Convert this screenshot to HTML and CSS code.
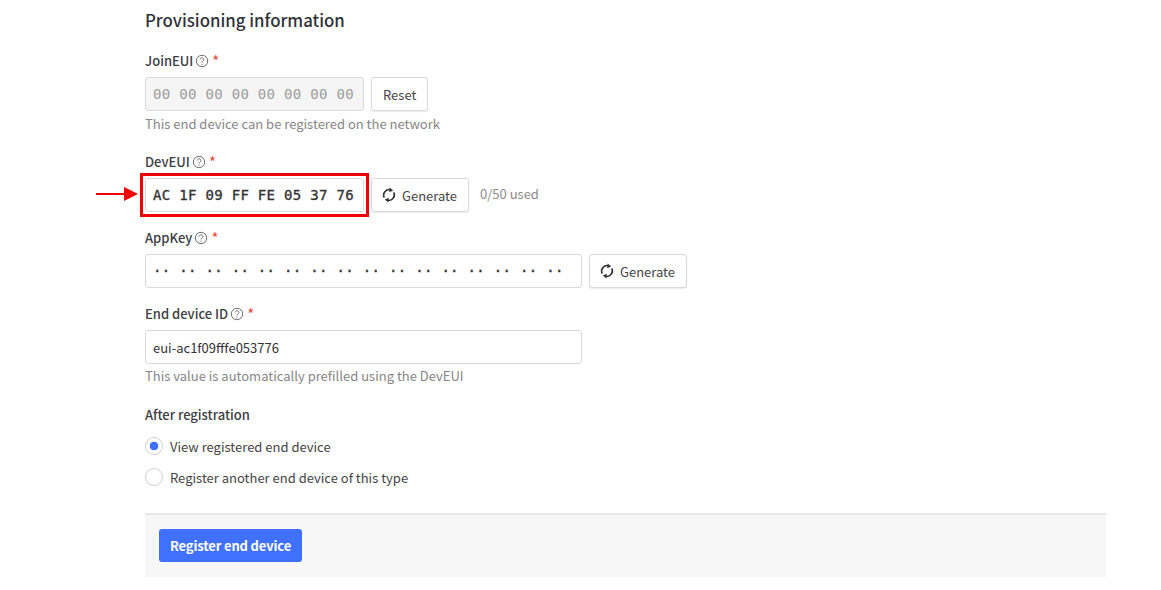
FILE: index.html
```html
<!DOCTYPE html>
<html lang="en">
  <head>
    <meta charset="UTF-8" />
    <meta name="viewport" content="width=device-width, initial-scale=1.0" />
    <title>Provisioning information</title>
    <link rel="stylesheet" href="styles.css">
  </head>
  <body>
    <div class="page">
      <h2 class="title">Provisioning information</h2>

      <div class="field field-join">
        <div class="label">JoinEUI
          <svg class="help" viewBox="0 0 14 14"><circle cx="7" cy="7" r="5.7"/><path d="M5.2 5.5a1.8 1.8 0 1 1 2.7 1.6c-.6.4-.9.7-.9 1.4"/><circle class="dot" cx="7" cy="10.2" r=".6"/></svg>
          <span class="req">*</span>
        </div>
        <div class="row">
          <div class="input mono disabled eui">00 00 00 00 00 00 00 00</div>
          <button class="btn btn-reset">Reset</button>
        </div>
        <div class="desc">This end device can be registered on the network</div>
      </div>

      <div class="field field-dev">
        <div class="label">DevEUI
          <svg class="help" viewBox="0 0 14 14"><circle cx="7" cy="7" r="5.7"/><path d="M5.2 5.5a1.8 1.8 0 1 1 2.7 1.6c-.6.4-.9.7-.9 1.4"/><circle class="dot" cx="7" cy="10.2" r=".6"/></svg>
          <span class="req">*</span>
        </div>
        <div class="row">
          <div class="input mono eui strong highlight">
            AC 1F 09 FF FE 05 37 76
            <svg class="arrow" viewBox="0 0 42 14"><path d="M0 7h30" /><polygon points="28,0 42,7 28,14"/></svg>
          </div>
          <button class="btn">
            <svg class="refresh" viewBox="0 0 16 16"><path d="M3.2 10.6A5.6 5.6 0 0 1 9.5 2.7"/><path d="M12.8 5.4A5.6 5.6 0 0 1 6.5 13.3"/><polygon points="8.6,0.4 12.2,3.4 8.2,5.2"/><polygon points="7.4,15.6 3.8,12.6 7.8,10.8"/></svg>
            Generate
          </button>
          <span class="used">0/50 used</span>
        </div>
      </div>

      <div class="field field-app">
        <div class="label">AppKey
          <svg class="help" viewBox="0 0 14 14"><circle cx="7" cy="7" r="5.7"/><path d="M5.2 5.5a1.8 1.8 0 1 1 2.7 1.6c-.6.4-.9.7-.9 1.4"/><circle class="dot" cx="7" cy="10.2" r=".6"/></svg>
          <span class="req">*</span>
        </div>
        <div class="row">
          <div class="input mono wide strong">·· ·· ·· ·· ·· ·· ·· ·· ·· ·· ·· ·· ·· ·· ·· ··</div>
          <button class="btn">
            <svg class="refresh" viewBox="0 0 16 16"><path d="M3.2 10.6A5.6 5.6 0 0 1 9.5 2.7"/><path d="M12.8 5.4A5.6 5.6 0 0 1 6.5 13.3"/><polygon points="8.6,0.4 12.2,3.4 8.2,5.2"/><polygon points="7.4,15.6 3.8,12.6 7.8,10.8"/></svg>
            Generate
          </button>
        </div>
      </div>

      <div class="field field-id">
        <div class="label">End device ID
          <svg class="help" viewBox="0 0 14 14"><circle cx="7" cy="7" r="5.7"/><path d="M5.2 5.5a1.8 1.8 0 1 1 2.7 1.6c-.6.4-.9.7-.9 1.4"/><circle class="dot" cx="7" cy="10.2" r=".6"/></svg>
          <span class="req">*</span>
        </div>
        <div class="row">
          <div class="input wide">eui-ac1f09fffe053776</div>
        </div>
        <div class="desc">This value is automatically prefilled using the DevEUI</div>
      </div>

      <div class="label after">After registration</div>
      <div class="radios">
        <div class="radio-row"><span class="radio checked"></span>View registered end device</div>
        <div class="radio-row"><span class="radio"></span>Register another end device of this type</div>
      </div>

      <div class="footer">
        <button class="btn-primary">Register end device</button>
      </div>
    </div>
  </body>
</html>
```

FILE: styles.css
```css
body {
  margin: 0;
  background: #fff;
  color: #3c3c3c;
  font-family: "Noto Sans CJK SC", "Open Sans", sans-serif;
  font-size: 13px;
}
.page {
  width: 961px;
  margin-left: 145px;
}
.title {
  margin: 0;
  padding-top: 8px;
  height: 24px;
  font-size: 16.8px;
  line-height: 24px;
  font-weight: 500;
  color: #2f3338;
}
.field-join {
  margin-top: 19px;
}
.field-join .desc {
  margin-top: 3px;
}
.field-dev {
  margin-top: 18px;
}
.field-app,
.field-id {
  margin-top: 16px;
}
.label {
  display: flex;
  align-items: center;
  height: 20px;
  line-height: 20px;
  font-weight: 500;
  color: #3c4043;
}
.help {
  width: 14px;
  height: 14px;
  margin-left: 2px;
  fill: none;
  stroke: #707070;
  stroke-width: 1;
}
.help .dot {
  fill: #707070;
  stroke: none;
}
.req {
  margin-left: 3px;
  color: #e8483f;
  font-size: 15px;
  font-weight: 400;
}
.row {
  display: flex;
  align-items: center;
  gap: 7px;
  margin-top: 6px;
}
.input {
  box-sizing: border-box;
  position: relative;
  height: 34px;
  line-height: 33px;
  padding: 0 7px;
  border: 1px solid #d9d9d9;
  border-radius: 3px;
  background: #fff;
  color: #333;
}
.mono {
  font-family: "DejaVu Sans Mono", "Liberation Mono", monospace;
  font-size: 14px;
  letter-spacing: 0.31px;
  white-space: nowrap;
}
.eui {
  width: 219px;
}
.wide {
  width: 437px;
}
.disabled {
  background: #f5f5f5;
  color: #9c9c9c;
}
.strong {
  color: #333;
  -webkit-text-stroke: 0.35px #333;
}
.highlight::after {
  content: "";
  position: absolute;
  top: -6px;
  right: -6px;
  bottom: -6px;
  left: -6px;
  border: 3px solid #f00000;
}
.arrow {
  position: absolute;
  left: -50px;
  top: 8px;
  width: 42px;
  height: 14px;
  fill: #f00000;
  stroke: #f00000;
  stroke-width: 2;
}
.arrow polygon {
  stroke: none;
}
.btn {
  display: flex;
  align-items: center;
  gap: 5px;
  box-sizing: border-box;
  height: 34px;
  padding: 0 11px 0 9px;
  border: 1px solid #d9d9d9;
  border-radius: 3px;
  background: #fff;
  box-shadow: 0 1px 1px rgba(0, 0, 0, 0.08);
  color: #444;
  font: inherit;
}
.btn-reset {
  padding: 0 11px;
}
.refresh {
  width: 16px;
  height: 16px;
  fill: #333;
  stroke: none;
}
.refresh path {
  fill: none;
  stroke: #333;
  stroke-width: 1.6;
}
.used {
  margin: 0 0 3px 4px;
  color: #8c8c8c;
}
.desc {
  height: 20px;
  line-height: 20px;
  margin-top: 2px;
  color: #868686;
}
.after {
  margin-top: 19px;
}
.radios {
  margin-top: 11px;
}
.radio-row {
  display: flex;
  align-items: center;
  height: 20px;
  margin-bottom: 11px;
  color: #444;
}
.radio {
  box-sizing: border-box;
  display: block;
  width: 18px;
  height: 18px;
  margin-right: 7px;
  border: 1px solid #d0d0d0;
  border-radius: 50%;
  background: #fff;
}
.radio.checked {
  background: radial-gradient(circle, #3f6fff 0 4px, #fff 4.6px);
}
.footer {
  box-sizing: border-box;
  height: 64px;
  margin-top: 26px;
  padding: 14px 14px;
  border-top: 2px solid #e8e8e8;
  background: #f7f7f7;
}
.btn-primary {
  display: block;
  height: 33px;
  padding: 0 11px;
  border: none;
  border-radius: 3px;
  background: #3f70ff;
  color: #fff;
  font: inherit;
  font-weight: 700;
  letter-spacing: -0.15px;
}
```
